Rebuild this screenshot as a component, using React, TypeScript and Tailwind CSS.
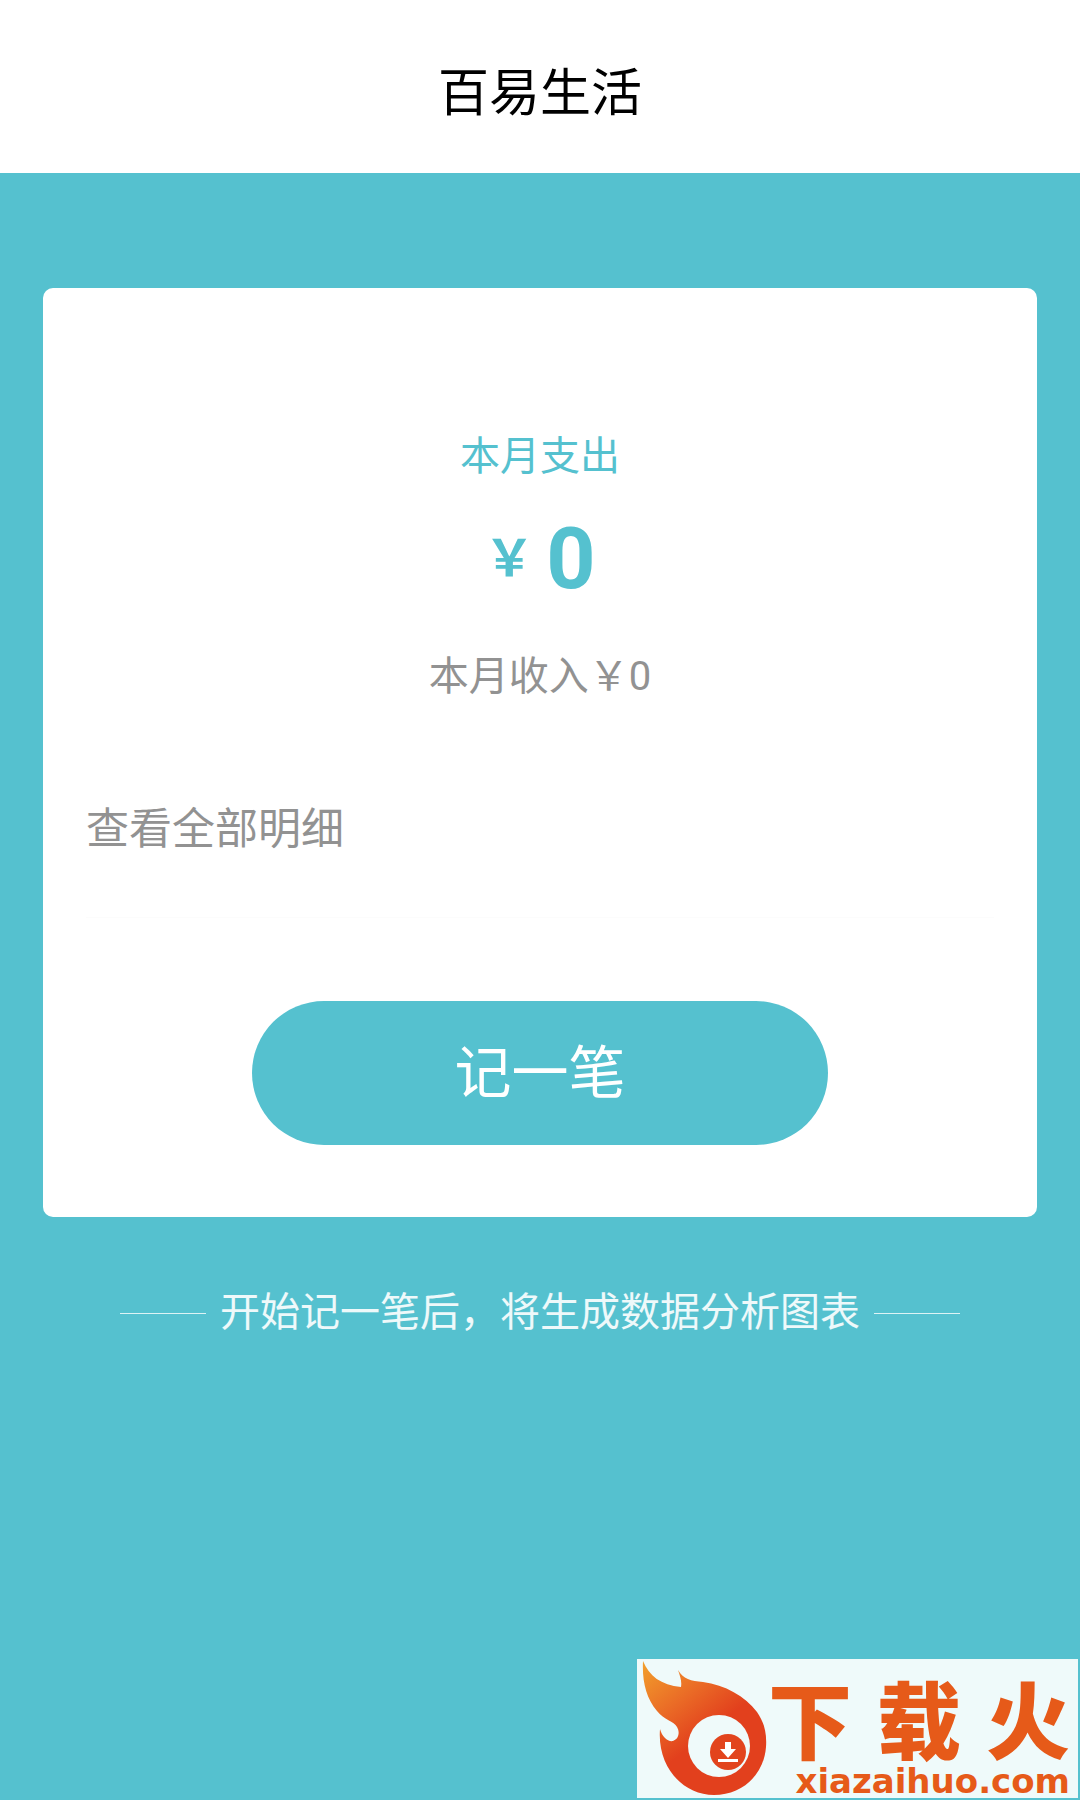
import type { ReactNode } from "react";

function Rule() {
    return <span aria-hidden="true" className="h-px w-[86px] shrink bg-white/80" />;
}

function FlameLogo() {
    return (
        <svg viewBox="0 0 131 139" className="h-[139px] w-[131px] shrink-0" aria-hidden="true">
            <defs>
                <linearGradient id="flame" x1="0" y1="0" x2="0.55" y2="0.75">
                    <stop offset="0" stopColor="#f2a02c" />
                    <stop offset="0.45" stopColor="#ea6a26" />
                    <stop offset="0.8" stopColor="#e2401d" />
                </linearGradient>
            </defs>
            <path
                d="M6 2C12 17 24 26 44 28C45 22 43 17 41 11C46 20 54 22 66 23C88 26 108 37 120 53C127 63 130 74 129 88C127 116 105 136 77 136C46 136 20 108 23 70C25 78 31 83 36 82C42 80 43 73 40 68C37 62 27 61 20 52C9 39 5 22 6 2Z"
                fill="url(#flame)"
            />
            <circle cx="82" cy="87" r="31" fill="#effafa" />
            <circle cx="91" cy="93" r="18" fill="#e2441d" />
            <path d="M88 83h6v7h5l-8 9-8-9h5z" fill="#fff" />
            <path d="M81 100h20v3H81z" fill="#fff" />
        </svg>
    );
}

function SiteBadge() {
    return (
        <aside className="mr-0.5 mb-0.5 flex h-[139px] w-[441px] self-end bg-[#effafa] text-[#e65a19]">
            <FlameLogo />
            <div className="flex flex-1 flex-col pt-6 pr-2">
                <div className="flex justify-between text-[84px] leading-[84px] font-black">
                    <span>下</span>
                    <span>载</span>
                    <span>火</span>
                </div>
                <div className="text-right font-['DejaVu_Sans'] text-[34px] leading-7 font-bold">xiazaihuo.com</div>
            </div>
        </aside>
    );
}

function Card({ children }: { children: ReactNode }) {
    return (
        <section className="mx-[43px] mt-[115px] flex flex-col items-center rounded-[10px] bg-white px-[43px] pt-[145px] pb-[72px]">
            {children}
        </section>
    );
}

export default function App() {
    const expense = 0;
    const income = 0;

    return (
        <div className="flex min-h-screen flex-col bg-[#55c1cf] font-[Roboto,'Noto_Sans_CJK_SC',sans-serif]" lang="zh-CN">
            {/* Header */}
            <header className="flex h-[173px] items-center justify-center bg-white pt-3.5">
                <h1 className="text-[51px] leading-[60px] text-black">百易生活</h1>
            </header>

            <main className="flex flex-1 flex-col">
                <Card>
                    <h2 className="text-[40px] leading-12 text-[#55c1cf]">本月支出</h2>
                    <p className="mt-[30px] flex h-24 items-center gap-3 font-bold text-[#55c1cf]">
                        <span className="text-[50px] leading-[60px]">￥</span>
                        <span className="text-[86px] leading-24">{expense}</span>
                    </p>
                    <p className="mt-[46px] text-[40px] leading-12 text-[#929292]">本月收入￥{income}</p>

                    <a
                        href="#details"
                        className="mt-[98px] block w-full border-b border-[#fcfcfc] pb-[58px] text-[43px] leading-[60px] text-[#929292]"
                    >
                        查看全部明细
                    </a>

                    <button
                        type="button"
                        className="mt-[83px] h-36 w-full max-w-[576px] rounded-full bg-[#55c1cf] pt-0.5 text-[57px] leading-[60px] text-white"
                    >
                        记一笔
                    </button>
                </Card>

                <div className="mt-[72px] mb-10 flex items-center justify-center gap-3.5 px-10 text-[40px] leading-12 text-white/90">
                    <Rule />
                    <p>开始记一笔后，将生成数据分析图表</p>
                    <Rule />
                </div>
            </main>

            <SiteBadge />
        </div>
    );
}
